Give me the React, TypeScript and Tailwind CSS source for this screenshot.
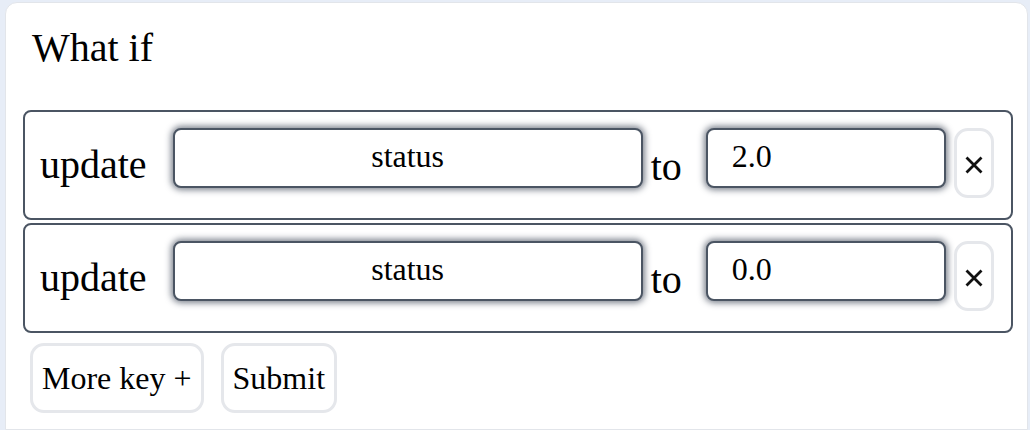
import { useState } from "react";

type Row = { key: string; value: string };

function CloseIcon() {
  return (
    <svg width="18" height="18" viewBox="0 0 18 18" fill="none" stroke="#111" strokeWidth="2.8">
      <path d="M1.5 1.5 L16.5 16.5 M16.5 1.5 L1.5 16.5" />
    </svg>
  );
}

export default function App() {
  const [rows, setRows] = useState<Row[]>([
    { key: "status", value: "2.0" },
    { key: "status", value: "0.0" },
  ]);

  return (
    <div className="min-h-[430px] bg-[#e7edf7] pl-[5px] pr-[2px] pt-[2px] font-['Liberation_Serif','Times_New_Roman',serif] text-black">
      <div className="min-h-[428px] rounded-t-[12px] border border-[#e2e5ea] bg-white pl-[17px] pr-[14px]">
        <h2 className="ml-[9px] mt-[25px] text-[40px] font-normal leading-none">What if</h2>

        <div className="mt-[42px] flex flex-col gap-[3px]">
          {rows.map((row, index) => (
            <div
              key={index}
              className="flex h-[110px] items-start rounded-[8px] border-2 border-[#4b5563] pl-[15px] pt-[16px]"
            >
              <span className="mr-[26px] mt-[17px] text-[40px] leading-none">update</span>
              <input
                value={row.key}
                readOnly
                className="mr-[8px] h-[60px] w-[470px] rounded-[8px] border-2 border-[#4b5563] bg-white pb-[4px] text-center text-[32px] shadow-[0_0_6px_2px_rgba(55,65,81,0.65)] outline-none"
              />
              <span className="mr-[24px] mt-[19px] text-[40px] leading-none">to</span>
              <input
                value={row.value}
                onChange={(e) => {
                  const v = e.target.value;
                  setRows((prev) => prev.map((r, i) => (i === index ? { ...r, value: v } : r)));
                }}
                className="mr-[8px] h-[60px] w-[240px] rounded-[8px] border-2 border-[#4b5563] bg-white px-6 pb-[4px] text-[32px] shadow-[0_0_6px_2px_rgba(55,65,81,0.65)] outline-none"
              />
              <button
                type="button"
                aria-label="remove"
                onClick={() => setRows((prev) => prev.filter((_, i) => i !== index))}
                className="flex h-[70px] w-[40px] items-center justify-center rounded-[14px] border-[3px] border-[#e5e7eb] bg-white pt-[3px]"
              >
                <CloseIcon />
              </button>
            </div>
          ))}
        </div>

        <div className="ml-[7px] mt-[10px] flex gap-[17px]">
          <button
            type="button"
            onClick={() => setRows((prev) => [...prev, { key: "status", value: "" }])}
            className="h-[70px] rounded-[14px] border-[3px] border-[#e5e7eb] bg-white px-[9px] text-[32px]"
          >
            More key +
          </button>
          <button
            type="button"
            className="h-[70px] rounded-[14px] border-[3px] border-[#e5e7eb] bg-white px-[9px] text-[32px]"
          >
            Submit
          </button>
        </div>
      </div>
    </div>
  );
}
